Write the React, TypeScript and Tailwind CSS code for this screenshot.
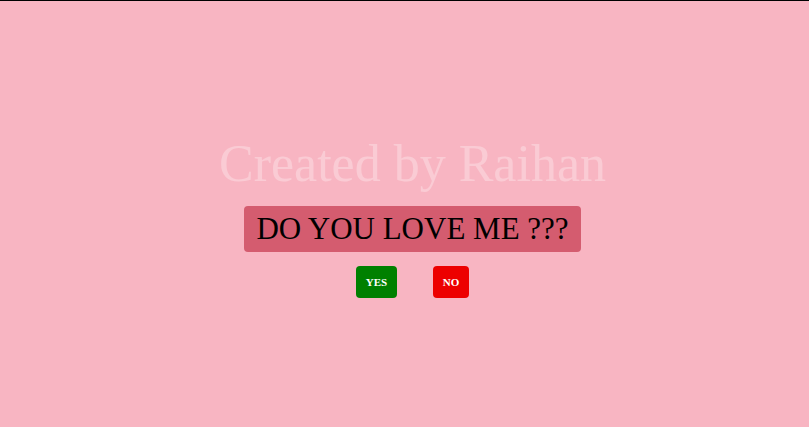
export default function App() {
  return (
    <div
      className="flex h-[427px] w-full flex-col items-center border-t border-black bg-[#f8b5c2] pl-[16px]"
      style={{ fontFamily: '"Liberation Serif", "Times New Roman", serif' }}
    >
      <h1 className="mt-[133px] text-[52px] leading-[60px] text-[#facbd4]">Created by Raihan</h1>
      <div className="mt-[12px] rounded-[4px] bg-[#d45c6f] px-[12px] py-[5px] text-[31px] leading-[36px] text-black">
        DO YOU LOVE ME ???
      </div>
      <div className="mt-[14px] flex gap-[36px]">
        <button className="h-[32px] w-[41px] rounded-[4px] bg-[#008000] text-[11px] font-bold text-white">
          YES
        </button>
        <button className="h-[32px] w-[36px] rounded-[4px] bg-[#ed0000] text-[11px] font-bold text-white">
          NO
        </button>
      </div>
    </div>
  );
}
